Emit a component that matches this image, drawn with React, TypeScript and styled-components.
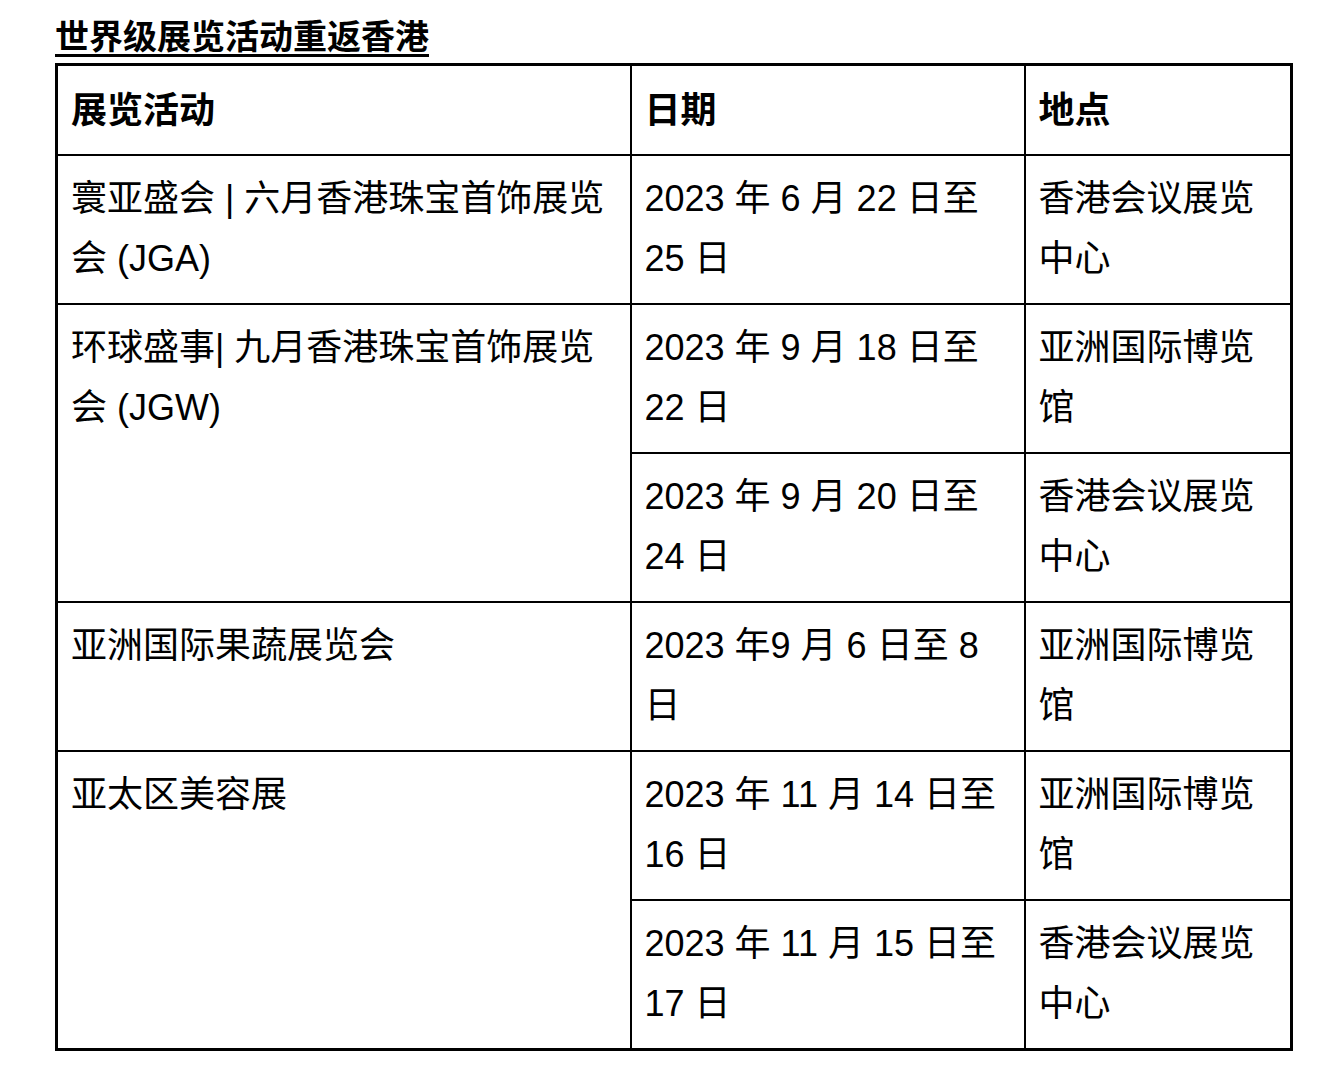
import React from "react";
import styled, { createGlobalStyle } from "styled-components";

const GlobalStyle = createGlobalStyle`
  html, body {
    margin: 0;
    padding: 0;
    background: #ffffff;
  }
  body {
    font-family: "Liberation Sans", "Noto Sans CJK SC", Arial, sans-serif;
    color: #000000;
  }
`;

const Page = styled.div`
  padding: 15px 0 40px 55px;
`;

const Title = styled.h2`
  margin: 0 0 4px 0;
  font-size: 34px;
  line-height: 44px;
  font-weight: 700;
  text-decoration: underline;
  text-decoration-thickness: 3px;
  text-underline-offset: 5px;
  font-family: "Liberation Sans", "Noto Sans CJK SC", sans-serif;
`;

const Table = styled.table`
  width: 1235px;
  table-layout: fixed;
  border-collapse: collapse;
  border: 3px solid #000;
`;

const Cell = styled.td<{ $head?: boolean }>`
  border: 2px solid #000;
  padding: ${(p) => (p.$head ? "15px 13px 13px 13px" : "13px 13px 14px 13px")};
  vertical-align: top;
  text-align: left;
  font-size: 36px;
  line-height: 60px;
  font-weight: ${(p) => (p.$head ? 700 : 400)};
  white-space: nowrap;
  color: #000;
`;

type Line = string[];

const lines = (l: Line) =>
  l.map((s, i) => (
    <React.Fragment key={i}>
      {i > 0 && <br />}
      {s}
    </React.Fragment>
  ));

export default function App() {
  return (
    <>
      <GlobalStyle />
      <Page>
        <Title>世界级展览活动重返香港</Title>
        <Table>
          <colgroup>
            <col style={{ width: 574 }} />
            <col style={{ width: 394 }} />
            <col style={{ width: 267 }} />
          </colgroup>
          <thead>
            <tr>
              <Cell as="th" $head>展览活动</Cell>
              <Cell as="th" $head>日期</Cell>
              <Cell as="th" $head>地点</Cell>
            </tr>
          </thead>
          <tbody>
            <tr>
              <Cell>{lines(["寰亚盛会 | 六月香港珠宝首饰展览", "会 (JGA)"])}</Cell>
              <Cell>{lines(["2023 年 6 月 22 日至", "25 日"])}</Cell>
              <Cell>{lines(["香港会议展览", "中心"])}</Cell>
            </tr>
            <tr>
              <Cell rowSpan={2}>{lines(["环球盛事| 九月香港珠宝首饰展览", "会 (JGW)"])}</Cell>
              <Cell>{lines(["2023 年 9 月 18 日至", "22 日"])}</Cell>
              <Cell>{lines(["亚洲国际博览", "馆"])}</Cell>
            </tr>
            <tr>
              <Cell>{lines(["2023 年 9 月 20 日至", "24 日"])}</Cell>
              <Cell>{lines(["香港会议展览", "中心"])}</Cell>
            </tr>
            <tr>
              <Cell>{lines(["亚洲国际果蔬展览会"])}</Cell>
              <Cell>{lines(["2023 年9 月 6 日至 8", "日"])}</Cell>
              <Cell>{lines(["亚洲国际博览", "馆"])}</Cell>
            </tr>
            <tr>
              <Cell rowSpan={2}>{lines(["亚太区美容展"])}</Cell>
              <Cell>{lines(["2023 年 11 月 14 日至", "16 日"])}</Cell>
              <Cell>{lines(["亚洲国际博览", "馆"])}</Cell>
            </tr>
            <tr>
              <Cell>{lines(["2023 年 11 月 15 日至", "17 日"])}</Cell>
              <Cell>{lines(["香港会议展览", "中心"])}</Cell>
            </tr>
          </tbody>
        </Table>
      </Page>
    </>
  );
}
